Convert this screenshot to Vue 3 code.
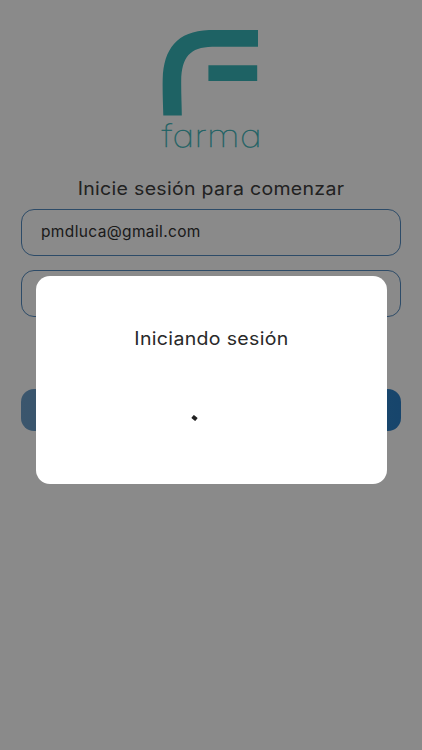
<script setup>
import {reactive} from 'vue';

const local = reactive({
  email: 'pmdluca@gmail.com',
  password: '',
  loading: true,
});

function login() {
  local.loading = true;
}
</script>

<template>
  <div class="screen">
    <form class="login" @submit.prevent="login">
      <svg class="logo" width="104" height="124" viewBox="0 0 104 124" role="img" aria-label="farma">
        <path d="M4.3 86.4 C4 75 3.4 62 3.7 50 C4.6 20 18 2.2 50 1 L99 1 V17.8 H53 C31 18.4 22.6 28 22.2 52 C22.1 65 22.7 75 22.8 86.4 Z" />
        <path d="M49.4 36.2 H98.2 V52 H49.4 Z" />
        <text x="2.5" y="118" textLength="100.5" lengthAdjust="spacingAndGlyphs">farma</text>
      </svg>

      <h1 class="title">Inicie sesión para comenzar</h1>

      <input v-model="local.email" class="field" type="text" spellcheck="false" autocomplete="off" />
      <input v-model="local.password" class="field" type="password" autocomplete="off" />
      <button class="submit" type="submit" aria-label="Iniciar sesión"></button>
    </form>

    <div v-if="local.loading" class="overlay">
      <div class="dialog">
        <p class="message">Iniciando sesión</p>
        <div class="spinner"></div>
      </div>
    </div>
  </div>
</template>

<style>
body {
  margin: 0;
  background: #fff;
}
</style>

<style scoped>
.screen {
  position: relative;
  height: 750px;
  overflow: hidden;
  background: #fff;
  font-family: Inter, 'Liberation Sans', sans-serif;
}

.login {
  display: flex;
  flex-direction: column;
  padding: 29px 21px 0;
}

.logo {
  align-self: center;
  fill: #38b5b9;
}

.logo text {
  font-family: Inter, sans-serif;
  font-size: 31px;
  font-weight: 100;
  font-feature-settings: 'cv11';
  stroke: #38b5b9;
  stroke-width: 0.3px;
}

.title {
  margin: 24px 0 8px;
  font-size: 18px;
  font-weight: 400;
  line-height: 24px;
  letter-spacing: 0.27px;
  text-align: center;
  white-space: nowrap;
  color: #404040;
  transform: scaleX(1.085);
}

.field {
  box-sizing: border-box;
  width: 100%;
  height: 47px;
  margin: 0 0 14px;
  padding: 0 19px 2px;
  border: 1px solid #538bc0;
  border-radius: 13px;
  outline: none;
  background: transparent;
  font-family: inherit;
  font-size: 15.5px;
  letter-spacing: 0.36px;
  color: #333;
}

.submit {
  height: 42px;
  margin-top: 58px;
  border: none;
  border-radius: 13px;
  background: linear-gradient(90deg, #6d9fc9, #2b80c8);
}

.overlay {
  position: absolute;
  inset: 0;
  display: flex;
  align-items: flex-start;
  justify-content: center;
  background: rgba(0, 0, 0, 0.46);
}

.dialog {
  display: flex;
  flex-direction: column;
  box-sizing: border-box;
  width: 351px;
  height: 208px;
  margin-top: 276px;
  padding-top: 51px;
  border-radius: 14px;
  background: #fff;
}

.message {
  margin: 0;
  font-size: 18px;
  line-height: 24px;
  letter-spacing: 0.3px;
  text-align: center;
  color: #292929;
  transform: scaleX(1.085);
}

.spinner {
  width: 5px;
  height: 4px;
  margin: 65px 0 0 156.5px;
  border-radius: 0.5px;
  background: #222;
  transform: rotate(40deg);
}
</style>
